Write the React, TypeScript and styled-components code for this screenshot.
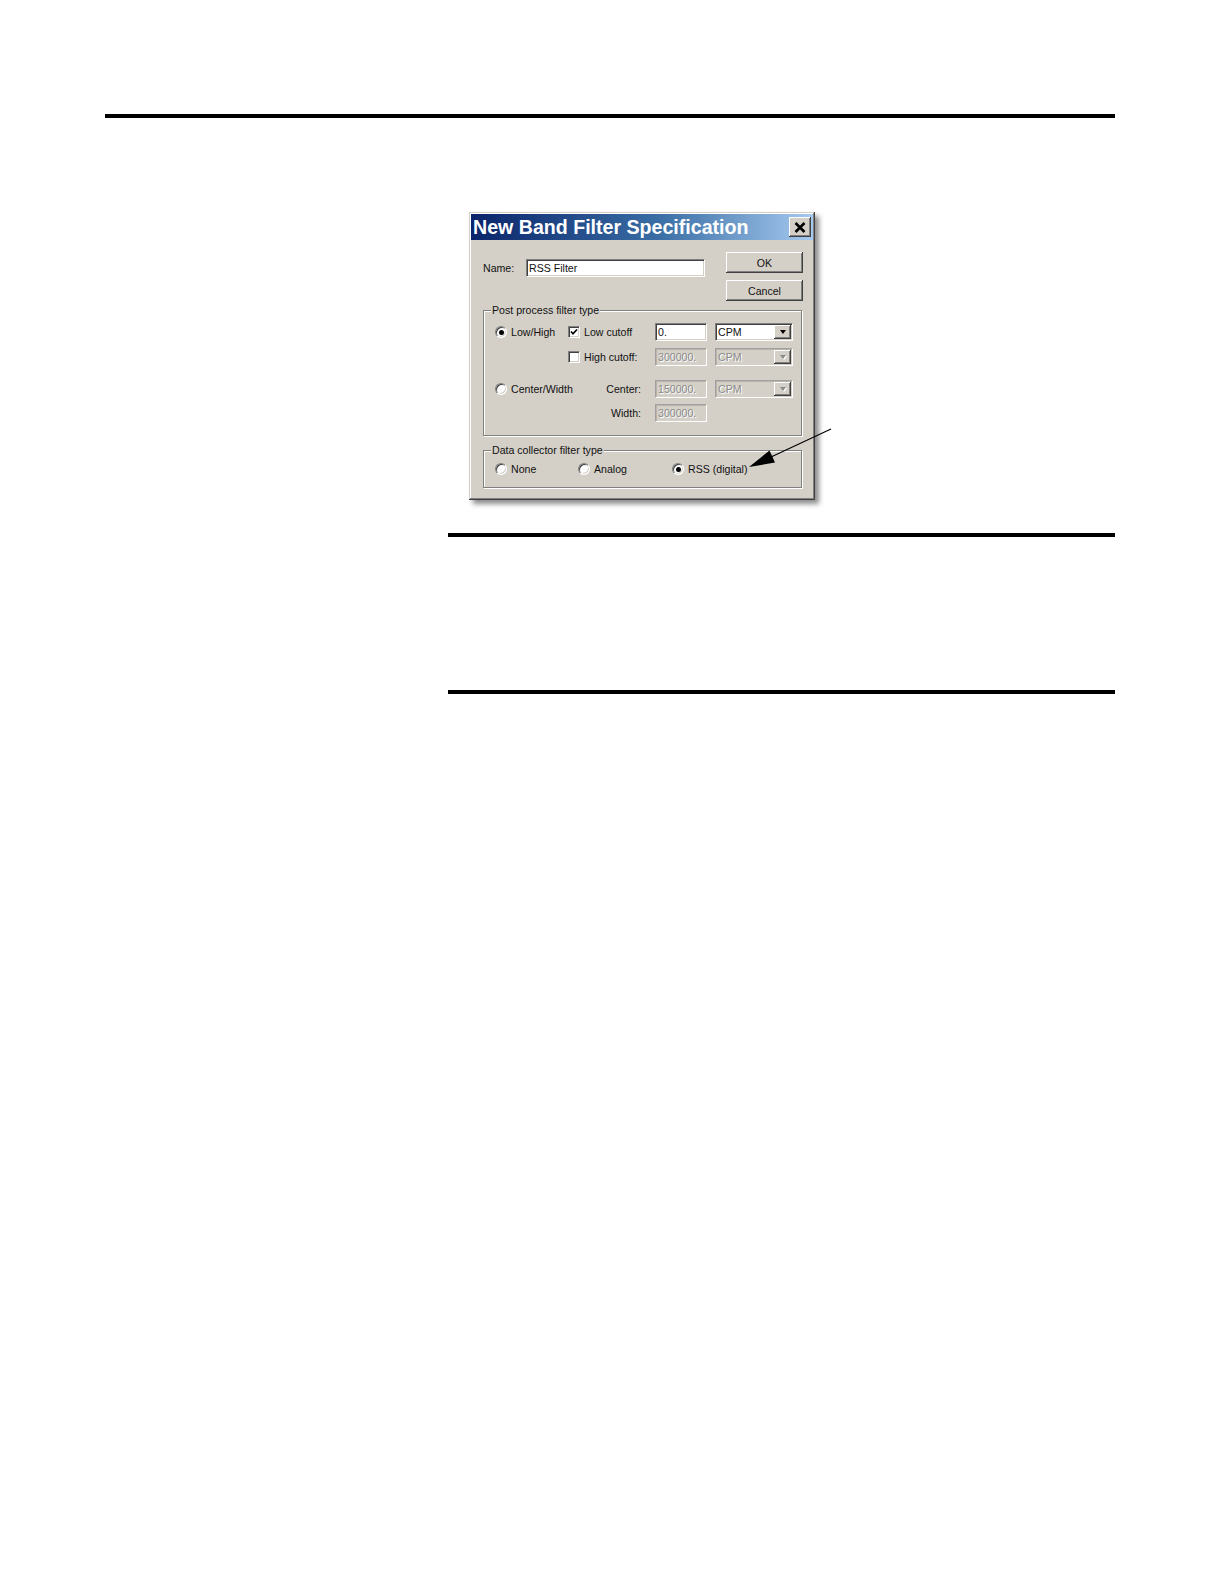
import styled, { createGlobalStyle, css } from "styled-components";

const GlobalStyle = createGlobalStyle`
  html, body { margin: 0; padding: 0; background: #fff; }
  body { font-family: "Liberation Sans", Arial, sans-serif; }
`;

const Page = styled.div`
  position: relative;
  width: 1224px;
  min-height: 1584px;
  box-sizing: border-box;
  padding-top: 114px;
  display: flex;
  flex-direction: column;
  align-items: flex-start;
`;

const Rule = styled.div<{ $left: number; $top: number; $h: number }>`
  margin-left: ${(p) => p.$left}px;
  margin-top: ${(p) => p.$top}px;
  width: ${(p) => 1115 - p.$left}px;
  height: ${(p) => p.$h}px;
  background: #000;
`;

const raised = css`
  background: #d4d0c8;
  box-shadow: inset -1px -1px 0 #404040, inset 1px 1px 0 #fff,
    inset -2px -2px 0 #808080, inset 2px 2px 0 #d4d0c8;
`;

const sunken = css`
  border: 1px solid;
  border-color: #808080 #fff #fff #808080;
  box-shadow: inset 1px 1px 0 #404040, inset -1px -1px 0 #d4d0c8;
`;

const Window = styled.div`
  margin: 94px 0 0 469px;
  width: 346px;
  height: 288px;
  box-sizing: border-box;
  padding: 2px;
  background: #d4d0c8;
  box-shadow: inset -1px -1px 0 #404040, inset 1px 1px 0 #d4d0c8,
    inset -2px -2px 0 #808080, inset 2px 2px 0 #fff,
    4px 4px 5px rgba(0, 0, 0, 0.45);
  display: flex;
  flex-direction: column;
  font-size: 10.6px;
  color: #111;
`;

const TitleBar = styled.div`
  height: 26px;
  flex: none;
  display: flex;
  align-items: center;
  justify-content: space-between;
  padding: 0 2px 0 2px;
  background: linear-gradient(to right, #0a246a 0%, #3a6ea5 55%, #a6caf0 100%);
`;

const Title = styled.span`
  color: #fff;
  font-weight: bold;
  font-size: 19.6px;
  line-height: 26px;
  white-space: nowrap;
`;

const CloseButton = styled.div`
  ${raised};
  width: 22px;
  height: 20px;
  display: flex;
  align-items: center;
  justify-content: center;
`;

const Body = styled.div`
  flex: 1;
  display: flex;
  flex-direction: column;
  padding: 12px 10px 6px 12px;
`;

const TopSection = styled.div`
  display: flex;
  justify-content: space-between;
  align-items: flex-start;
`;

const NameField = styled.div`
  display: flex;
  align-items: center;
  margin-top: 7px;
`;

const Label = styled.span<{ $w?: number; $right?: boolean }>`
  ${(p) => p.$w && `width: ${p.$w}px; flex: none;`}
  ${(p) => p.$right && "text-align: right; padding-right: 14px; box-sizing: border-box;"}
  white-space: nowrap;
  line-height: 13px;
`;

const TextBox = styled.div<{ $w: number; $disabled?: boolean }>`
  ${sunken};
  width: ${(p) => p.$w}px;
  height: 18px;
  box-sizing: border-box;
  padding: 0 2px;
  display: flex;
  align-items: center;
  white-space: nowrap;
  background: ${(p) => (p.$disabled ? "#d4d0c8" : "#fff")};
  color: ${(p) => (p.$disabled ? "#8a8a8a" : "#111")};
  ${(p) => p.$disabled && "text-shadow: 1px 1px 0 #fff; border-color: #a0a0a0 #fff #fff #a0a0a0; box-shadow: inset 1px 1px 0 #b8b4ac;"}
`;

const ButtonColumn = styled.div`
  display: flex;
  flex-direction: column;
  gap: 7px;
`;

const PushButton = styled.div`
  ${raised};
  width: 77px;
  height: 21px;
  display: flex;
  align-items: center;
  justify-content: center;
`;

const Group = styled.fieldset<{ $mt: number }>`
  margin: ${(p) => p.$mt}px 0 0 0;
  padding: 0;
  width: 319px;
  box-sizing: border-box;
  border: 1px solid #808080;
  box-shadow: inset 1px 1px 0 #fff, 1px 1px 0 #fff;
  min-inline-size: 0;
`;

const Legend = styled.legend`
  margin-left: 7px;
  padding: 0 1px;
  line-height: 13px;
  background: #d4d0c8;
`;

const GroupContent = styled.div<{ $pt: number; $pb: number }>`
  padding: ${(p) => p.$pt}px 0 ${(p) => p.$pb}px 11px;
  display: flex;
  flex-direction: column;
`;

const FilterRow = styled.div<{ $mt?: number }>`
  display: grid;
  grid-template-columns: 73px 87px 60px 78px;
  align-items: center;
  height: 18px;
  margin-top: ${(p) => p.$mt ?? 0}px;
`;

const CollectorRow = styled.div`
  display: grid;
  grid-template-columns: 83px 94px auto;
  align-items: center;
  height: 14px;
`;

const Choice = styled.div`
  display: flex;
  align-items: center;
  gap: 4px;
`;

const Radio = styled.span<{ $on?: boolean }>`
  position: relative;
  flex: none;
  width: 12px;
  height: 12px;
  box-sizing: border-box;
  border-radius: 50%;
  background: #fff;
  border: 1px solid;
  border-color: #808080 #fff #fff #808080;
  box-shadow: inset 1px 1px 0 #404040, inset -1px -1px 0 #d4d0c8;
  ${(p) =>
    p.$on &&
    css`
      &::after {
        content: "";
        position: absolute;
        left: 2.5px;
        top: 2.5px;
        width: 5px;
        height: 5px;
        border-radius: 50%;
        background: #000;
      }
    `}
`;

const CheckBox = styled.span`
  ${sunken};
  flex: none;
  width: 12px;
  height: 12px;
  box-sizing: border-box;
  background: #fff;
  display: flex;
  align-items: center;
  justify-content: center;
`;

const Combo = styled.div<{ $disabled?: boolean }>`
  ${sunken};
  width: 78px;
  height: 18px;
  box-sizing: border-box;
  padding: 1px 1px 1px 2px;
  display: flex;
  align-items: center;
  justify-content: space-between;
  background: ${(p) => (p.$disabled ? "#d4d0c8" : "#fff")};
  color: ${(p) => (p.$disabled ? "#8a8a8a" : "#111")};
  ${(p) => p.$disabled && "text-shadow: 1px 1px 0 #fff; border-color: #a0a0a0 #fff #fff #a0a0a0; box-shadow: inset 1px 1px 0 #b8b4ac;"}
`;

const DropButton = styled.span`
  ${raised};
  width: 17px;
  height: 14px;
  display: flex;
  align-items: center;
  justify-content: center;
`;

const DropArrow = styled.span<{ $disabled?: boolean }>`
  width: 0;
  height: 0;
  border-left: 3.5px solid transparent;
  border-right: 3.5px solid transparent;
  border-top: 4px solid ${(p) => (p.$disabled ? "#8a8a8a" : "#000")};
  ${(p) => p.$disabled && "filter: drop-shadow(1px 1px 0 #fff);"}
`;

const Overlay = styled.svg`
  position: absolute;
  left: 0;
  top: 0;
  pointer-events: none;
`;

function Select({ disabled }: { disabled?: boolean }) {
  return (
    <Combo $disabled={disabled}>
      <span>CPM</span>
      <DropButton>
        <DropArrow $disabled={disabled} />
      </DropButton>
    </Combo>
  );
}

export default function App() {
  return (
    <Page>
      <GlobalStyle />
      <Rule $left={105} $top={0} $h={4} />

      <Window>
        <TitleBar>
          <Title>New Band Filter Specification</Title>
          <CloseButton>
            <svg width="12" height="11" viewBox="0 0 12 11">
              <path d="M1.5 1 L10.5 10 M10.5 1 L1.5 10" stroke="#000" strokeWidth="2.6" />
            </svg>
          </CloseButton>
        </TitleBar>

        <Body>
          <TopSection>
            <NameField>
              <Label $w={43}>Name:</Label>
              <TextBox $w={179}>RSS Filter</TextBox>
            </NameField>
            <ButtonColumn>
              <PushButton>OK</PushButton>
              <PushButton>Cancel</PushButton>
            </ButtonColumn>
          </TopSection>

          <Group $mt={3}>
            <Legend>Post process filter type</Legend>
            <GroupContent $pt={6} $pb={13}>
              <FilterRow>
                <Choice>
                  <Radio $on />
                  <Label>Low/High</Label>
                </Choice>
                <Choice>
                  <CheckBox>
                    <svg width="8" height="8" viewBox="0 0 8 8">
                      <path d="M1 3.5 L3 5.8 L7 1.5" fill="none" stroke="#000" strokeWidth="1.7" />
                    </svg>
                  </CheckBox>
                  <Label>Low cutoff</Label>
                </Choice>
                <TextBox $w={52}>0.</TextBox>
                <Select />
              </FilterRow>
              <FilterRow $mt={7}>
                <span />
                <Choice>
                  <CheckBox />
                  <Label>High cutoff:</Label>
                </Choice>
                <TextBox $w={52} $disabled>300000.</TextBox>
                <Select disabled />
              </FilterRow>
              <FilterRow $mt={14}>
                <Choice>
                  <Radio />
                  <Label>Center/Width</Label>
                </Choice>
                <Label $right>Center:</Label>
                <TextBox $w={52} $disabled>150000.</TextBox>
                <Select disabled />
              </FilterRow>
              <FilterRow $mt={6}>
                <span />
                <Label $right>Width:</Label>
                <TextBox $w={52} $disabled>300000.</TextBox>
                <span />
              </FilterRow>
            </GroupContent>
          </Group>

          <Group $mt={8}>
            <Legend>Data collector filter type</Legend>
            <GroupContent $pt={5} $pb={11}>
              <CollectorRow>
                <Choice>
                  <Radio />
                  <Label>None</Label>
                </Choice>
                <Choice>
                  <Radio />
                  <Label>Analog</Label>
                </Choice>
                <Choice>
                  <Radio $on />
                  <Label>RSS (digital)</Label>
                </Choice>
              </CollectorRow>
            </GroupContent>
          </Group>
        </Body>
      </Window>

      <Rule $left={448} $top={33} $h={4} />
      <Rule $left={448} $top={153} $h={4} />

      <Overlay width="1224" height="1584" viewBox="0 0 1224 1584">
        <line x1="831" y1="429" x2="771" y2="457" stroke="#000" strokeWidth="1.2" />
        <polygon points="749,467 775,462.5 769.5,450.5" fill="#000" />
      </Overlay>
    </Page>
  );
}
